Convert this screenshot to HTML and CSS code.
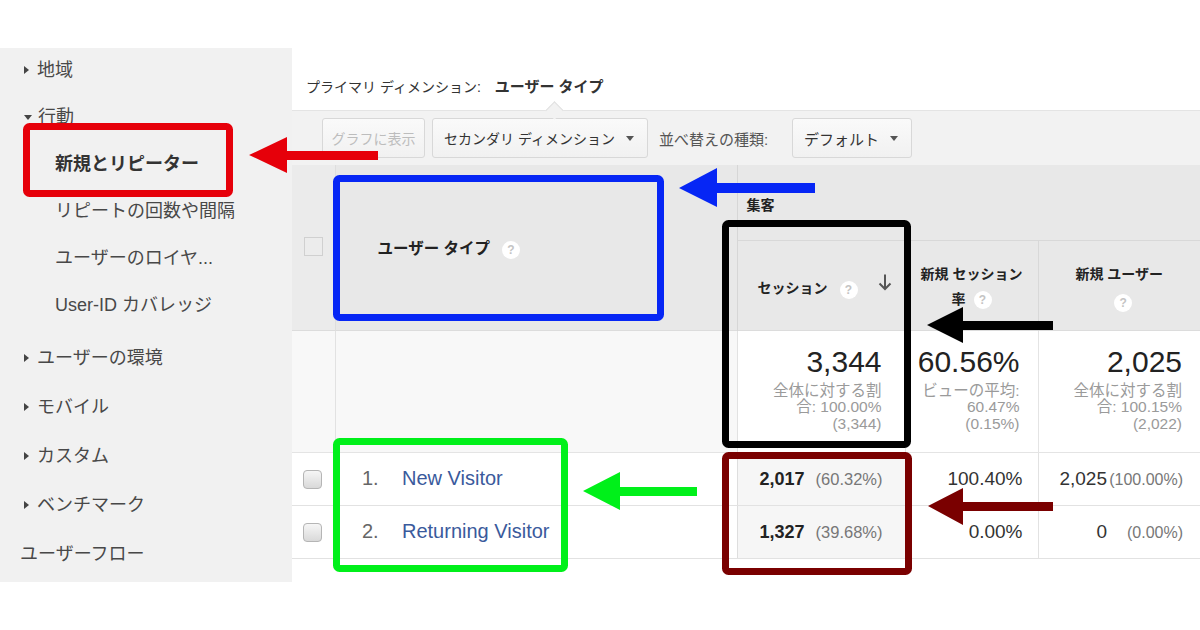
FILE: index.html
```html
<!DOCTYPE html>
<html lang="ja">
<head>
<meta charset="utf-8">
<title>新規とリピーター</title>
<link rel="stylesheet" href="styles.css">
</head>
<body>
<div class="page">
  <div class="layout">
    <aside class="sidebar">
      <ul class="nav">
        <li class="nav-item"><span class="tri tri-right"></span>地域</li>
        <li class="nav-item"><span class="tri tri-down"></span>行動</li>
        <li class="nav-sub nav-active">新規とリピーター</li>
        <li class="nav-sub">リピートの回数や間隔</li>
        <li class="nav-sub">ユーザーのロイヤ...</li>
        <li class="nav-sub">User-ID カバレッジ</li>
        <li class="nav-item nav-group nav-lower"><span class="tri tri-right"></span>ユーザーの環境</li>
        <li class="nav-item nav-lower"><span class="tri tri-right"></span>モバイル</li>
        <li class="nav-item nav-lower"><span class="tri tri-right"></span>カスタム</li>
        <li class="nav-item nav-lower"><span class="tri tri-right"></span>ベンチマーク</li>
        <li class="nav-plain">ユーザーフロー</li>
      </ul>
    </aside>
    <main class="main">
      <div class="dim-bar">
        <span class="dim-label">プライマリ ディメンション:</span>
        <b class="dim-current">ユーザー タイプ</b>
      </div>
      <div class="toolbar">
        <button class="btn btn-graph" disabled>グラフに表示</button>
        <button class="btn btn-secondary">セカンダリ ディメンション<span class="caret"></span></button>
        <span class="sort-label">並べ替えの種類:</span>
        <button class="btn btn-default">デフォルト<span class="caret"></span></button>
      </div>
      <table class="report">
        <colgroup>
          <col class="c-check">
          <col class="c-dim">
          <col class="c-sess">
          <col class="c-rate">
          <col class="c-users">
        </colgroup>
        <thead>
          <tr class="r-group">
            <th class="h-check" rowspan="2"><span class="box-head"></span></th>
            <th class="h-dim" rowspan="2">ユーザー タイプ<span class="help">?</span></th>
            <th class="h-group" colspan="3">集客</th>
          </tr>
          <tr class="r-sub">
            <th class="h-sess">
              <span class="h-sess-label">セッション<span class="help">?</span></span>
              <svg class="sort-arrow" width="14" height="18" viewBox="0 0 14 18"><path d="M7 1.5V16M1.5 10.5L7 16l5.5-5.5" fill="none" stroke="#555" stroke-width="2"/></svg>
            </th>
            <th class="h-metric">新規 セッション<br>率<span class="help">?</span></th>
            <th class="h-metric h-last">新規 ユーザー<br><span class="help help-solo">?</span></th>
          </tr>
        </thead>
        <tbody>
          <tr class="r-total">
            <td class="t-check"></td>
            <td class="t-dim"></td>
            <td class="t-metric t-sess">
              <div class="t-big">3,344</div>
              <div class="t-sub">全体に対する割<br>合: 100.00%<br>(3,344)</div>
            </td>
            <td class="t-metric t-rate">
              <div class="t-big">60.56%</div>
              <div class="t-sub">ビューの平均:<br>60.47%<br>(0.15%)</div>
            </td>
            <td class="t-metric t-users">
              <div class="t-big">2,025</div>
              <div class="t-sub">全体に対する割<br>合: 100.15%<br>(2,022)</div>
            </td>
          </tr>
          <tr class="r-data">
            <td class="d-check"><span class="chk"></span></td>
            <td class="d-dim"><span class="d-num">1.</span><span class="d-link">New Visitor</span></td>
            <td class="d-sess"><b>2,017</b><span class="d-pct">(60.32%)</span></td>
            <td class="d-rate">100.40%</td>
            <td class="d-users">2,025<span class="d-upct">(100.00%)</span></td>
          </tr>
          <tr class="r-data">
            <td class="d-check"><span class="chk"></span></td>
            <td class="d-dim"><span class="d-num">2.</span><span class="d-link">Returning Visitor</span></td>
            <td class="d-sess"><b>1,327</b><span class="d-pct">(39.68%)</span></td>
            <td class="d-rate">0.00%</td>
            <td class="d-users">0<span class="d-upct">(0.00%)</span></td>
          </tr>
        </tbody>
      </table>
    </main>
  </div>
  <svg class="annot" width="1200" height="630" viewBox="0 0 1200 630">
    <rect x="26.5" y="126.5" width="203" height="67" rx="3" fill="none" stroke="#e6000a" stroke-width="7"/>
    <polygon points="249,155 287,137 287,151 378,151 378,160 287,160 287,173" fill="#e6000a"/>
    <rect x="336.5" y="178.5" width="324" height="139" rx="3" fill="none" stroke="#0626f5" stroke-width="7"/>
    <polygon points="679,188 717,168 717,183 815,183 815,193 717,193 717,207" fill="#0626f5"/>
    <rect x="725.5" y="223.5" width="182" height="221" rx="3" fill="none" stroke="#000" stroke-width="7"/>
    <polygon points="927,325 963,307 963,321 1053,321 1053,330 963,330 963,343" fill="#000"/>
    <rect x="336.5" y="441.5" width="228" height="127" rx="3" fill="none" stroke="#00f01a" stroke-width="7"/>
    <polygon points="583,491 620,472 620,487 697,487 697,496 620,496 620,510" fill="#00f01a"/>
    <rect x="725.5" y="455.5" width="183" height="116" rx="3" fill="none" stroke="#7a0000" stroke-width="7"/>
    <polygon points="928,506 963,488 963,502 1053,502 1053,511 963,511 963,525" fill="#7a0000"/>
  </svg>
</div>
</body>
</html>
```

FILE: styles.css
```css
* { box-sizing: border-box; }

html, body {
  margin: 0;
  padding: 0;
  background: #fff;
}

body {
  font-family: "Liberation Sans", "Noto Sans CJK JP", Arial, sans-serif;
  color: #333;
}

.page {
  position: relative;
  width: 1200px;
  height: 630px;
  overflow: hidden;
  background: #fff;
}

.layout {
  display: flex;
  padding-top: 48px;
}

/* ---------- sidebar ---------- */
.sidebar {
  width: 292px;
  height: 534px;
  flex: none;
  background: #f1f1f1;
}

.nav {
  list-style: none;
  margin: 0;
  padding: 10px 0 0 0;
  font-size: 18px;
  color: #484848;
  display: flex;
  flex-direction: column;
}

.nav li {
  height: 24px;
  line-height: 24px;
  margin-bottom: 23px;
  white-space: nowrap;
  display: flex;
  align-items: center;
}

.nav-item { padding-left: 24px; }
.nav-sub { padding-left: 55px; }
.nav-plain { padding-left: 20px; }
.nav-active { font-weight: bold; color: #333; }
.nav li.nav-lower { margin-bottom: 25px; }
.nav-group { margin-top: 6px; }

.tri {
  display: inline-block;
  width: 0;
  height: 0;
  margin-right: 8px;
}
.tri-right {
  border-left: 5px solid #444;
  border-top: 4px solid transparent;
  border-bottom: 4px solid transparent;
}
.tri-down {
  border-top: 5px solid #444;
  border-left: 4px solid transparent;
  border-right: 4px solid transparent;
  margin-right: 6px;
}

/* ---------- main ---------- */
.main {
  width: 908px;
  flex: none;
}

.dim-bar {
  height: 62px;
  padding: 29px 0 0 14px;
  font-size: 14px;
  line-height: 20px;
  color: #333;
  white-space: nowrap;
}
.dim-label { margin-right: 10px; }
.dim-current { font-weight: bold; font-size: 15px; }

.toolbar {
  position: relative;
  height: 55px;
  background: #f2f2f2;
  border-top: 1px solid #e4e4e4;
  display: flex;
  align-items: center;
  padding-left: 30px;
}
.toolbar::before {
  content: "";
  position: absolute;
  left: 256px;
  top: -7px;
  width: 12px;
  height: 12px;
  background: #f2f2f2;
  border-top: 1px solid #e0e0e0;
  border-left: 1px solid #e0e0e0;
  transform: rotate(45deg);
}

.btn {
  height: 40px;
  border: 1px solid #d8d8d8;
  border-radius: 3px;
  background: linear-gradient(#fafafa, #f1f1f1);
  font-family: inherit;
  font-size: 14px;
  color: #333;
  display: flex;
  align-items: center;
  padding: 0 11px;
  white-space: nowrap;
}
.btn-graph {
  width: 103px;
  color: #bdbdbd;
  justify-content: center;
  padding: 0;
}
.btn-secondary {
  width: 216px;
  margin-left: 7px;
  justify-content: space-between;
}
.btn-default {
  width: 120px;
  margin-left: 12px;
  font-size: 15px;
  justify-content: space-between;
}
.caret {
  width: 0;
  height: 0;
  border-top: 5px solid #555;
  border-left: 4px solid transparent;
  border-right: 4px solid transparent;
  margin-right: 2px;
}
.sort-label {
  width: 121px;
  margin-left: 11px;
  font-size: 15px;
  color: #555;
  white-space: nowrap;
}

/* ---------- table ---------- */
.report {
  width: 908px;
  border-collapse: collapse;
  table-layout: fixed;
}
.c-check { width: 43px; }
.c-dim { width: 402px; }
.c-sess { width: 168px; }
.c-rate { width: 133px; }
.c-users { width: 162px; }

th, td { padding: 0; }

thead th {
  background: #e8e8e8;
  font-size: 14px;
  font-weight: bold;
  color: #222;
  white-space: nowrap;
}

.r-group { height: 75px; }
.r-sub { height: 90px; }

.h-check {
  background: #ebebeb;
  border-right: 1px solid #dedede;
  vertical-align: middle;
  text-align: center;
}
.box-head {
  display: inline-block;
  width: 19px;
  height: 19px;
  border: 1px solid #d0d0d0;
  background: #ececec;
  margin-top: 2px;
}
.report .h-dim {
  text-align: left;
  padding-left: 42px;
  vertical-align: middle;
  border-right: 1px solid #d6d6d6;
  font-size: 15.5px;
}
.h-group {
  text-align: left;
  vertical-align: top;
  padding: 30px 9px 0;
  line-height: 20px;
  border-bottom: 1px solid #d8d8d8;
}

.help {
  display: inline-block;
  width: 18px;
  height: 18px;
  border-radius: 50%;
  background: #fff;
  color: #c4c4c4;
  font-size: 12px;
  line-height: 18px;
  text-align: center;
  font-weight: bold;
  margin-left: 12px;
  vertical-align: middle;
}
.help-solo { margin-left: 0; margin-top: 6px; }

.h-sess {
  text-align: left;
  padding: 6px 13px 0 20px;
  vertical-align: middle;
  border-right: 1px solid #d8d8d8;
}
.h-sess-label { display: inline-block; }
.sort-arrow {
  float: right;
  margin-top: -4px;
}
.h-metric {
  text-align: center;
  vertical-align: middle;
  line-height: 25px;
  padding-top: 4px;
  border-right: 1px solid #d8d8d8;
}
.h-metric .help { margin-left: 8px; }
.h-last { border-right: none; }

/* totals */
.r-total { height: 122px; }
.r-total td {
  border-top: 1px solid #dcdcdc;
  border-bottom: 1px solid #e4e4e4;
}
.t-check { background: #f8f8f8; }
.t-dim { background: #f8f8f8; border-left: 1px solid #e2e2e2; border-right: 1px solid #e2e2e2; }
.t-metric {
  background: #fff;
  text-align: right;
  vertical-align: top;
  padding-top: 14px;
}
.t-sess { padding-right: 23px; border-right: 1px solid #e4e4e4; }
.t-rate { padding-right: 18px; border-right: 1px solid #e4e4e4; }
.t-users { padding-right: 18px; }
.t-big {
  font-size: 30px;
  line-height: 34px;
  color: #222;
}
.t-sub {
  margin-top: 4px;
  font-size: 15.5px;
  line-height: 16.5px;
  color: #9a9a9a;
  white-space: nowrap;
}

/* data rows */
.r-data { height: 53px; }
.r-data td {
  border-bottom: 1px solid #e2e2e2;
  font-size: 19px;
  color: #333;
  white-space: nowrap;
  vertical-align: middle;
}
.d-check { text-align: center; padding-right: 2px; }
.chk {
  display: inline-block;
  width: 19px;
  height: 19px;
  border: 1px solid #b5b5b5;
  border-radius: 4px;
  background: linear-gradient(#f6f6f6, #d9d9d9);
  vertical-align: middle;
}
.r-data .d-dim { padding-left: 27px; font-size: 20px; }
.d-num {
  display: inline-block;
  width: 40px;
  color: #666;
}
.d-link { color: #3a5a9c; }
.d-sess {
  background: #f6f6f6;
  text-align: right;
  padding-right: 22px;
  border-left: 1px solid #dedede;
  border-right: 1px solid #dedede;
}
.d-sess b { font-size: 18px; color: #222; }
.d-pct {
  font-size: 16.5px;
  color: #777;
  margin-left: 11px;
}
.d-rate {
  text-align: right;
  padding-right: 15px;
  border-right: 1px solid #e2e2e2;
}
.d-users {
  text-align: right;
  padding-right: 17px;
}
.d-upct {
  display: inline-block;
  width: 76px;
  text-align: right;
  font-size: 16px;
  color: #777;
}

/* annotation overlay */
.annot {
  position: absolute;
  left: 0;
  top: 0;
  pointer-events: none;
}
```
